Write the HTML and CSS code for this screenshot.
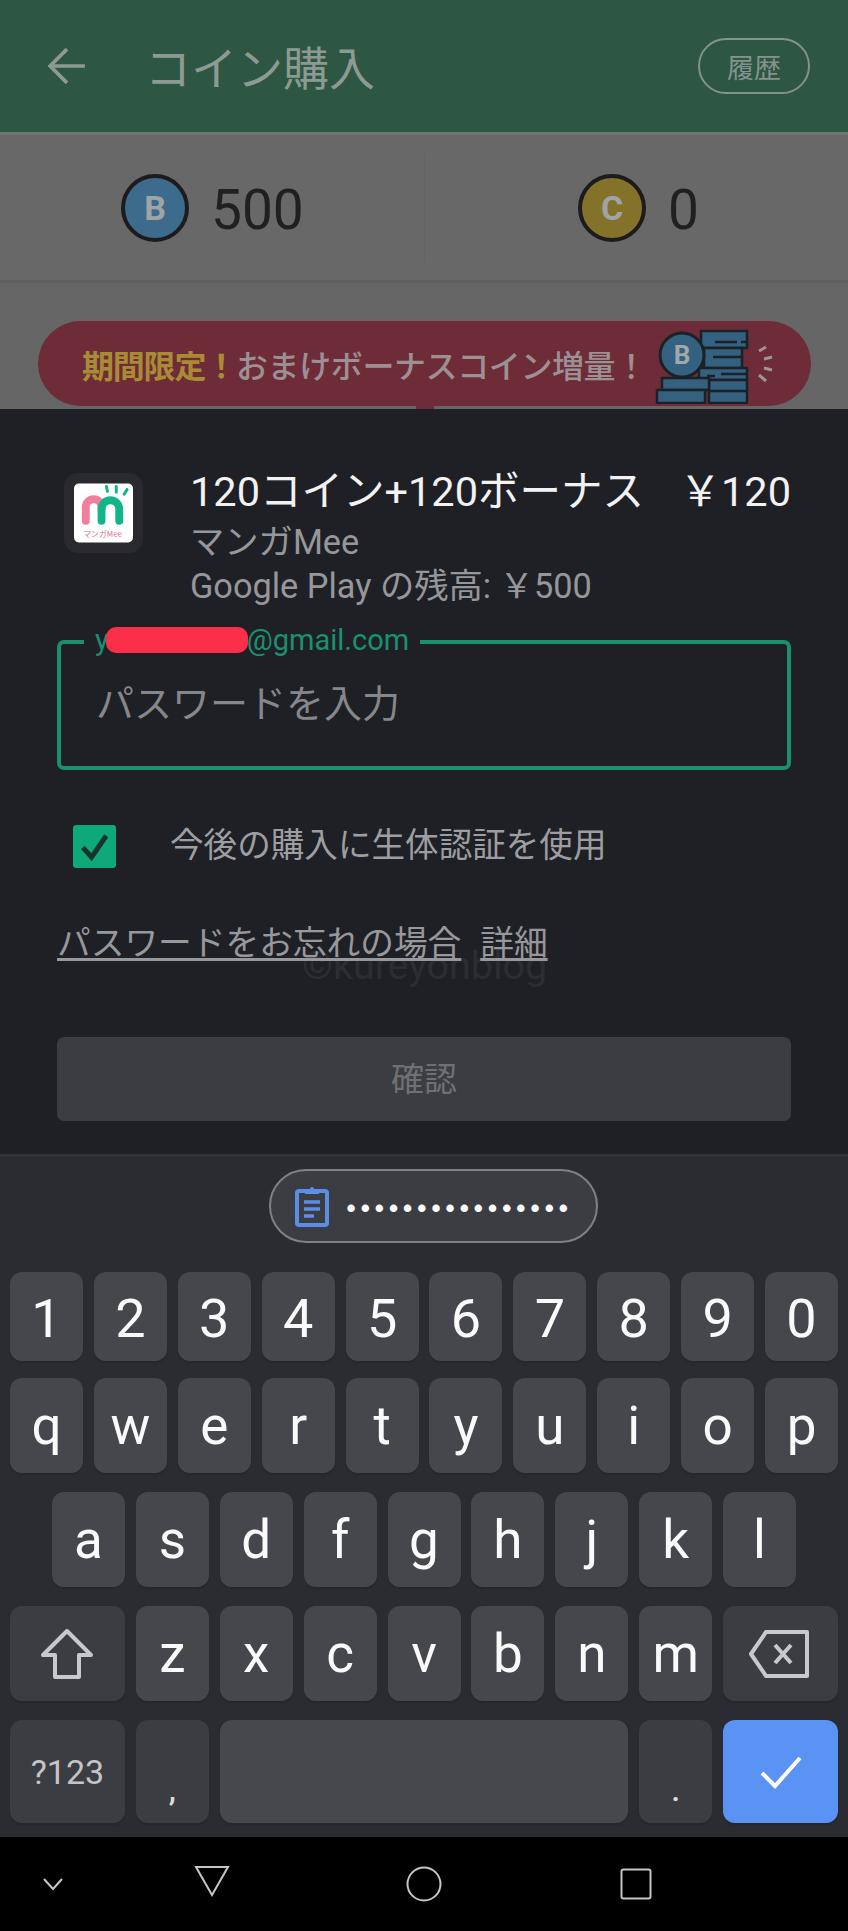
FILE: index.html
```html
<!DOCTYPE html>
<html lang="ja">
<head>
  <meta charset="UTF-8" />
  <title>コイン購入</title>
  <link rel="stylesheet" href="styles.css">
</head>
<body>
  <header class="topbar">
    <svg class="back" viewBox="0 0 38 38"><path d="M36 19H3M19 3 3 19l16 16" /></svg>
    <h1>コイン購入</h1>
    <span class="history">履歴</span>
  </header>

  <section class="balance">
    <div class="balance-cell">
      <span class="coin coin-b">B</span>
      <span class="amount">500</span>
    </div>
    <div class="balance-cell balance-right">
      <span class="coin coin-c">C</span>
      <span class="amount">0</span>
    </div>
  </section>

  <section class="promo">
    <div class="banner">
      <p><span class="gold">期間限定！</span>おまけボーナスコイン増量！</p>
      <svg class="stack" viewBox="0 0 120 75">
        <g fill="#33617f" stroke="#1b2227" stroke-width="2.5">
          <rect x="46" y="2" width="46" height="17" />
          <rect x="49" y="19" width="38" height="20" />
          <rect x="44" y="39" width="48" height="12" />
          <rect x="54" y="51" width="38" height="23" />
          <rect x="7" y="49" width="47" height="12" />
          <rect x="2" y="61" width="48" height="13" />
        </g>
        <path d="M60 13h22M86 13h6M58 28h30M60 47h-8M66 45h26M54 62h38" stroke="#1b2227" stroke-width="2.5" />
        <circle cx="27" cy="26" r="22" fill="#33617f" stroke="#1b2227" stroke-width="3" />
        <text x="27" y="35" class="stack-b">B</text>
        <path d="M104 22l7-4M109 30l8-2M109 39l8 2M104 46l7 6" stroke="#a09396" stroke-width="3" fill="none" />
      </svg>
    </div>
    <span class="banner-tip"></span>
  </section>

  <main class="sheet">
    <div class="product">
      <div class="app-icon">
        <svg viewBox="0 0 60 60">
          <rect width="60" height="60" rx="5" fill="#fff" />
          <path d="M12 38V24a8 8 0 0 1 16 0v2" fill="none" stroke="#ef7f9c" stroke-width="8" stroke-linecap="round" />
          <path d="M28 38V26a9 9 0 0 1 18 0v12" fill="none" stroke="#12b58a" stroke-width="8" stroke-linecap="round" />
          <path d="M33 3l1 5M43 3v6M54 6l-3 5" stroke="#12b58a" stroke-width="3" stroke-linecap="round" />
          <text x="29" y="54" class="app-icon-name">マンガMee</text>
        </svg>
      </div>
      <div class="product-text">
        <div class="product-title">
          <span>120コイン+120ボーナス</span>
          <span>￥120</span>
        </div>
        <div class="product-sub">マンガMee</div>
        <div class="product-sub">Google Play の残高: ￥500</div>
      </div>
    </div>

    <div class="field">
      <span class="field-label">y<i class="redact"></i>@gmail.com</span>
      <span class="placeholder">パスワードを入力</span>
    </div>

    <label class="check-row">
      <span class="checkbox">
        <svg viewBox="0 0 44 44"><path d="M10 23l9 10 15-22" /></svg>
      </span>
      今後の購入に生体認証を使用
    </label>

    <div class="links">
      <span class="watermark">©kureyonblog</span>
      <a>パスワードをお忘れの場合</a>
      <a>詳細</a>
    </div>

    <button class="confirm">確認</button>
  </main>

  <section class="keyboard">
    <div class="clip-row">
      <div class="clip-pill">
        <svg viewBox="0 0 34 42">
          <path d="M10 4h5a2 2 0 0 1 4 0h5v5H10z" fill="#5b8fe6" />
          <rect x="2" y="6" width="30" height="34" rx="2" fill="none" stroke="#5b8fe6" stroke-width="4" />
          <path d="M9 17h16M9 24h16M9 31h10" stroke="#5b8fe6" stroke-width="3.5" />
        </svg>
        <span class="clip-dots">••••••••••••••••</span>
      </div>
    </div>

    <div class="key-row row-num">
      <span class="key">1</span><span class="key">2</span><span class="key">3</span><span class="key">4</span><span class="key">5</span>
      <span class="key">6</span><span class="key">7</span><span class="key">8</span><span class="key">9</span><span class="key">0</span>
    </div>
    <div class="key-row">
      <span class="key">q</span><span class="key">w</span><span class="key">e</span><span class="key">r</span><span class="key">t</span>
      <span class="key">y</span><span class="key">u</span><span class="key">i</span><span class="key">o</span><span class="key">p</span>
    </div>
    <div class="key-row row-center">
      <span class="key">a</span><span class="key">s</span><span class="key">d</span><span class="key">f</span><span class="key">g</span>
      <span class="key">h</span><span class="key">j</span><span class="key">k</span><span class="key">l</span>
    </div>
    <div class="key-row">
      <span class="key key-wide key-dark">
        <svg class="key-shift" viewBox="0 0 54 52"><path d="M27 3 3 27h12v22h24V27h12z" /></svg>
      </span>
      <span class="key">z</span><span class="key">x</span><span class="key">c</span><span class="key">v</span>
      <span class="key">b</span><span class="key">n</span><span class="key">m</span>
      <span class="key key-wide key-dark">
        <svg class="key-back" viewBox="0 0 62 50"><path d="M18 3h41v44H18L3 25zM27 16l16 18M43 16 27 34" /></svg>
      </span>
    </div>
    <div class="key-row row-bottom">
      <span class="key key-wide key-dark key-sym">?123</span>
      <span class="key key-dark key-low">,</span>
      <span class="key key-space"></span>
      <span class="key key-dark key-low">.</span>
      <span class="key key-wide key-go">
        <svg class="go-check" viewBox="0 0 44 36"><path d="M3 19l13 13L41 4" /></svg>
      </span>
    </div>
  </section>

  <nav class="navbar">
    <svg class="nav-chevron" viewBox="0 0 24 14"><path d="M3 2l9 10 9-10" /></svg>
    <svg class="nav-back" viewBox="0 0 36 32"><path d="M2 2h32L18 30z" /></svg>
    <svg class="nav-home" viewBox="0 0 36 36"><circle cx="18" cy="18" r="16.5" /></svg>
    <svg class="nav-recent" viewBox="0 0 32 32"><rect x="1.5" y="1.5" width="29" height="29" rx="2" /></svg>
  </nav>
</body>
</html>
```

FILE: styles.css
```css
* {
  box-sizing: border-box;
}

body {
  margin: 0;
  width: 848px;
  height: 1931px;
  overflow: hidden;
  font-family: "Roboto", "Noto Sans CJK JP", sans-serif;
  background-color: #000;
  color: #fff;
}

/* dimmed app behind the sheet */
.topbar {
  height: 132px;
  background-color: #2d5643;
  display: flex;
  align-items: center;
  padding: 0 38px 0 47px;
}

.back {
  width: 40px;
  height: 40px;
  fill: none;
  stroke: #8d9a93;
  stroke-width: 3.5;
}

.topbar h1 {
  margin: -2px 0 0 58px;
  font-size: 46px;
  font-weight: 400;
  color: #8d9a93;
  font-family: "Noto Sans CJK JP", sans-serif;
  flex: 1;
}

.history {
  width: 112px;
  height: 56px;
  border: 2px solid #84938b;
  border-radius: 28px;
  font-size: 27px;
  color: #84938b;
  font-family: "Noto Sans CJK JP", sans-serif;
  display: flex;
  align-items: center;
  justify-content: center;
}

.balance {
  height: 151px;
  background-color: #686868;
  border-top: 3px solid #6f7671;
  border-bottom: 3px solid #5f5f5f;
  display: flex;
  align-items: center;
}

.balance-cell {
  flex: 0 0 50%;
  height: 110px;
  display: flex;
  align-items: center;
  gap: 22px;
  padding-left: 121px;
}

.balance-right {
  border-left: 1px solid #646464;
  padding-left: 153px;
}

.coin {
  width: 68px;
  height: 68px;
  border-radius: 50%;
  border: 4px solid #1c1c1c;
  font-size: 34px;
  font-weight: 700;
  display: flex;
  align-items: center;
  justify-content: center;
  color: #a0a4a7;
}

.coin-b {
  background-color: #3c6b8c;
}

.coin-c {
  background-color: #85722a;
}

.amount {
  margin-top: 5px;
  font-size: 55px;
  color: #202020;
}

.promo {
  height: 126px;
  background-color: #666;
  padding: 38px 37px 0 38px;
  position: relative;
}

.banner {
  height: 85px;
  border-radius: 43px;
  background-color: #6e2b38;
  display: flex;
  align-items: center;
  padding-left: 44px;
}

.banner p {
  margin: 0;
  font-size: 32px;
  font-weight: 500;
  color: #9c9094;
  white-space: nowrap;
  font-family: "Noto Sans CJK JP", sans-serif;
  letter-spacing: -0.4px;
}

.gold {
  font-weight: 700;
  color: #a98b36;
  letter-spacing: -1.2px;
}

.stack {
  width: 120px;
  height: 75px;
  margin: 6px 0 0 8px;
}

.stack-b {
  font-size: 26px;
  font-weight: 700;
  fill: #a0a8ae;
  text-anchor: middle;
}

.banner-tip {
  position: absolute;
  left: 416px;
  top: 121px;
  width: 18px;
  height: 5px;
  background-color: #6e2b38;
}

/* purchase sheet */
.sheet {
  height: 745px;
  background-color: #1f2025;
  padding: 64px 57px 0;
  display: flex;
  flex-direction: column;
}

.product {
  display: flex;
  align-items: flex-start;
  gap: 47px;
}

.app-icon {
  width: 79px;
  height: 80px;
  margin-left: 7px;
  padding: 10px;
  background-color: #29292e;
  border-radius: 14px;
  flex: none;
}

.app-icon svg {
  display: block;
  width: 100%;
  height: 100%;
}

.app-icon-name {
  font-size: 8px;
  fill: #d6709a;
  text-anchor: middle;
  font-family: "Noto Sans CJK JP", sans-serif;
}

.product-text {
  flex: 1;
  margin-top: -2px;
}

.product-title {
  display: flex;
  justify-content: space-between;
  margin-bottom: 7px;
  font-size: 41.5px;
  line-height: 42px;
  white-space: nowrap;
  color: #f2f2f2;
}

.product-sub {
  font-size: 34.3px;
  line-height: 44px;
  color: #96979a;
  white-space: nowrap;
}

.field {
  position: relative;
  margin-top: 32px;
  height: 130px;
  border: 4px solid #1a8f6d;
  border-radius: 7px;
  padding: 30px 0 0 35px;
}

.field-label {
  position: absolute;
  left: 23px;
  top: -20px;
  padding: 0 11px;
  background-color: #1f2025;
  font-size: 29px;
  line-height: 32px;
  color: #1a9070;
  white-space: nowrap;
}

.redact {
  display: inline-block;
  width: 142px;
  height: 26px;
  margin-left: -3px;
  margin-right: -1px;
  border-radius: 10px;
  background-color: #fb2f48;
  vertical-align: -3px;
}

.placeholder {
  font-size: 38px;
  line-height: 60px;
  color: #86878a;
}

.check-row {
  display: flex;
  align-items: center;
  margin: 53px 0 0 16px;
  font-size: 33.6px;
  line-height: 46px;
  color: #9d9ea1;
}

.checkbox {
  width: 43px;
  height: 43px;
  margin-right: 54px;
  background-color: #0fa878;
  border-radius: 3px;
  flex: none;
}

.checkbox svg {
  display: block;
  fill: none;
  stroke: #17332c;
  stroke-width: 5;
}

.links {
  position: relative;
  margin-top: 51px;
  display: flex;
  gap: 19px;
  font-size: 33.7px;
  line-height: 48px;
  color: #97989b;
}

.links a {
  position: relative;
  text-decoration: underline;
  text-underline-offset: 3px;
}

.watermark {
  position: absolute;
  left: 245px;
  top: 24px;
  font-size: 39.4px;
  line-height: 44px;
  color: #2c2d31;
}

.confirm {
  margin-top: 69px;
  height: 84px;
  padding-bottom: 5px;
  border: 0;
  border-radius: 7px;
  background-color: #3c3d42;
  color: #6f7073;
  font-size: 33px;
  font-family: "Noto Sans CJK JP", sans-serif;
}

/* keyboard */
.keyboard {
  height: 683px;
  background-color: #2a2c31;
  border-top: 3px solid #313338;
  padding: 0 10px;
}

.clip-row {
  height: 115px;
  display: flex;
  justify-content: center;
  padding: 12px 0 0 18px;
}

.clip-pill {
  width: 329px;
  height: 74px;
  border: 2px solid #808184;
  border-radius: 37px;
  background-color: #3c3d42;
  display: flex;
  align-items: center;
  gap: 18px;
  padding-left: 24px;
}

.clip-pill svg {
  width: 34px;
  height: 42px;
}

.clip-dots {
  margin-top: 4px;
  font-family: "Liberation Sans", sans-serif;
  font-size: 26px;
  font-weight: 700;
  letter-spacing: 5.05px;
  white-space: nowrap;
}

.key-row {
  display: flex;
  justify-content: center;
  gap: 10.9px;
  height: 95px;
  margin-bottom: 19px;
}

.row-num {
  height: 89px;
  margin-bottom: 17px;
}

.row-num .key {
  padding-top: 3px;
  font-size: 54px;
}

.row-bottom {
  height: 103px;
  margin-bottom: 0;
}

.key {
  width: 73px;
  flex: none;
  border-radius: 12px;
  background-color: #45474c;
  box-shadow: 0 2px 1px #26282c;
  display: flex;
  align-items: center;
  justify-content: center;
  font-size: 53px;
  color: #fafafa;
}

.key-wide {
  width: 115px;
}

.key-dark {
  background-color: #3b3d42;
}

.key-space {
  flex: 1;
  background-color: #46484d;
}

.key-low {
  align-items: flex-end;
  padding-bottom: 14px;
  font-size: 32px;
  font-weight: 500;
  color: #dcdcdc;
}

.key-sym {
  font-size: 34px;
  color: #c4c5c7;
}

.key-go {
  background-color: #5b93f5;
}

.key-shift,
.key-back {
  fill: none;
  stroke: #c8c9cb;
  stroke-width: 4;
  stroke-linejoin: round;
}

.key-shift {
  width: 54px;
  height: 52px;
}

.key-back {
  width: 62px;
  height: 50px;
  margin-left: -4px;
}

.go-check {
  width: 44px;
  height: 36px;
  fill: none;
  stroke: #fff;
  stroke-width: 4;
}

/* android nav */
.navbar {
  height: 94px;
  position: relative;
  display: flex;
  align-items: center;
  padding-left: 41px;
}

.navbar svg {
  fill: none;
  stroke: #c6c6c6;
  stroke-width: 2;
}

.nav-chevron {
  width: 24px;
  height: 14px;
}

.nav-back {
  width: 36px;
  height: 32px;
  margin: -6px 0 0 129px;
}

.nav-home {
  width: 36px;
  height: 36px;
  margin-left: 176px;
}

.nav-recent {
  width: 32px;
  height: 32px;
  margin-left: 178px;
}
```
